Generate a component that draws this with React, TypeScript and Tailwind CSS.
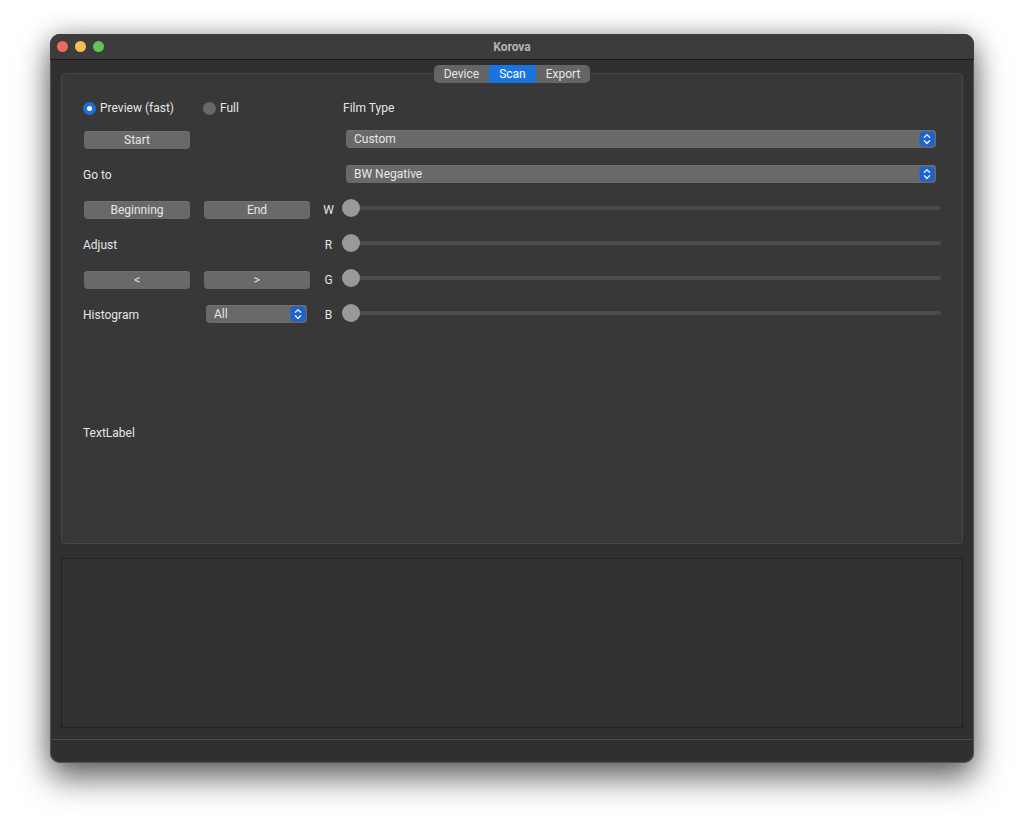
import { useState } from "react"
import type { ReactNode } from "react"
import clsx from "clsx"

const tabs = ["Device", "Scan", "Export"]
const channels = ["W", "R", "G", "B"]

function TitleBar() {
  return (
    <header className="relative flex h-[26px] items-center justify-center border-b border-[#1c1c1c] bg-[#3c3c3c]">
      <div className="absolute left-[7px] flex gap-[7px]">
        <span className="size-[11px] rounded-full bg-[#ec6a5e]" />
        <span className="size-[11px] rounded-full bg-[#f4bf4f]" />
        <span className="size-[11px] rounded-full bg-[#61c454]" />
      </div>
      <h1 className="text-[12px] font-bold text-[#b4b4b4]">Korova</h1>
    </header>
  )
}

function PushButton({ children }: { children: ReactNode }) {
  return (
    <button
      type="button"
      className="mx-px h-[18px] rounded-[4px] bg-[#696969] text-center leading-[18px] text-[#e6e6e6] shadow-[inset_0_1px_0_#707070]"
    >
      {children}
    </button>
  )
}

type PopupProps = { label: string; options: string[]; className?: string }

function Popup({ label, options, className }: PopupProps) {
  return (
    <div className={clsx("relative pb-[2px]", className)}>
      <select
        aria-label={label}
        className="block h-[18px] w-full appearance-none rounded-[4px] bg-[#696969] pr-5 pl-2 leading-[18px] text-[#e6e6e6] shadow-[inset_0_1px_0_#707070]"
      >
        {options.map((option) => (
          <option key={option}>{option}</option>
        ))}
      </select>
      <svg
        viewBox="0 0 16 16"
        className="pointer-events-none absolute top-px right-px size-4"
        fill="none"
        aria-hidden="true"
      >
        <rect x="0.5" y="0.5" width="15" height="15" rx="3.5" fill="#1c62d0" />
        <path
          d="M5.4 6.3 8 3.7l2.6 2.6M5.4 9.8 8 12.4l2.6-2.6"
          stroke="#dce8fa"
          strokeWidth="1.5"
          strokeLinecap="round"
          strokeLinejoin="round"
        />
      </svg>
    </div>
  )
}

type ModeProps = { label: string; checked: boolean; onChange: () => void }

function ScanMode({ label, checked, onChange }: ModeProps) {
  return (
    <label className="flex items-center gap-1 whitespace-nowrap">
      <input
        type="radio"
        name="mode"
        checked={checked}
        onChange={onChange}
        className="size-[13px] appearance-none rounded-full bg-[#686868] checked:border-[4px] checked:border-[#1a70d8] checked:bg-white"
      />
      {label}
    </label>
  )
}

function ChannelSlider({ name }: { name: string }) {
  const [value, setValue] = useState(0)

  return (
    <>
      <label htmlFor={`channel-${name}`} className="pt-px text-center">
        {name}
      </label>
      <div className="flex pb-[3px]">
        <input
          id={`channel-${name}`}
          type="range"
          value={value}
          onChange={(e) => setValue(Number(e.target.value))}
          className="h-[18px] w-full appearance-none bg-transparent [&::-webkit-slider-runnable-track]:h-1 [&::-webkit-slider-runnable-track]:rounded-full [&::-webkit-slider-runnable-track]:bg-[#4c4c4c] [&::-webkit-slider-thumb]:-mt-[7px] [&::-webkit-slider-thumb]:size-[18px] [&::-webkit-slider-thumb]:appearance-none [&::-webkit-slider-thumb]:rounded-full [&::-webkit-slider-thumb]:bg-[#999999]"
        />
      </div>
    </>
  )
}

function ScanPanel() {
  const [mode, setMode] = useState("preview")

  return (
    <>
      <div className="flex gap-3">
        <div className="grid grid-cols-[108px_108px] grid-rows-[28px] auto-rows-[35px] items-center gap-x-3">
          <ScanMode
            label="Preview (fast)"
            checked={mode === "preview"}
            onChange={() => setMode("preview")}
          />
          <ScanMode label="Full" checked={mode === "full"} onChange={() => setMode("full")} />
          <PushButton>Start</PushButton>
          <span />
          <span>Go to</span>
          <span />
          <PushButton>Beginning</PushButton>
          <PushButton>End</PushButton>
          <span>Adjust</span>
          <span />
          <PushButton>&lt;</PushButton>
          <PushButton>&gt;</PushButton>
          <span>Histogram</span>
          <Popup
            label="Histogram"
            options={["All", "Red", "Green", "Blue"]}
            className="mr-1 ml-[3px]"
          />
        </div>

        <div className="grid flex-1 grid-cols-[11px_1fr] grid-rows-[28px] auto-rows-[35px] items-center gap-x-2">
          <span className="col-start-2 pl-px">Film Type</span>
          <Popup
            label="Film Type"
            options={["Custom"]}
            className="col-start-2 mr-[5px] ml-1"
          />
          <Popup
            label="Film Process"
            options={["BW Negative", "Color Negative", "Positive"]}
            className="col-start-2 mr-[5px] ml-1"
          />
          {channels.map((name) => (
            <ChannelSlider key={name} name={name} />
          ))}
        </div>
      </div>
      <div className="flex flex-1 items-center">TextLabel</div>
    </>
  )
}

export default function App() {
  const [active, setActive] = useState("Scan")

  return (
    <div className="flex min-h-screen flex-col bg-white px-[50px] pt-[34px] pb-[66px] font-['Roboto',sans-serif] text-[12px] leading-4 text-[#e6e6e6]">
      <div className="flex flex-1 flex-col rounded-[10px] shadow-[0_16px_32px_rgba(0,0,0,0.55),0_0_24px_rgba(0,0,0,0.25)]">
        <div className="flex flex-1 flex-col overflow-hidden rounded-[10px] bg-[#303030] shadow-[inset_0_0_0_1px_#555555]">
          <TitleBar />
          <main className="flex flex-1 flex-col px-[11px] pt-[5px] pb-[11px]">
            <div
              role="tablist"
              className="z-10 -mb-[10px] flex h-[18px] self-center overflow-hidden rounded-[5px] bg-[#656565]"
            >
              {tabs.map((tab) => (
                <button
                  key={tab}
                  type="button"
                  role="tab"
                  aria-selected={active === tab}
                  onClick={() => setActive(tab)}
                  className={clsx(
                    "px-[10px] leading-[18px]",
                    active === tab ? "bg-[#1a74e0] text-white" : "text-[#e6e6e6]",
                  )}
                >
                  {tab}
                </button>
              ))}
            </div>
            <section
              role="tabpanel"
              aria-label={active}
              className="flex flex-1 flex-col rounded-[4px] border border-[#464646] bg-[#383838] px-[21px] pt-5 pb-[9px]"
            >
              {active === "Scan" && <ScanPanel />}
            </section>
            <section
              aria-label="Preview"
              className="mt-[14px] h-[170px] border border-[#222222] bg-[#313131]"
            />
          </main>
          <footer className="h-6 border-t border-[#4a4a4a]" />
        </div>
      </div>
    </div>
  )
}
